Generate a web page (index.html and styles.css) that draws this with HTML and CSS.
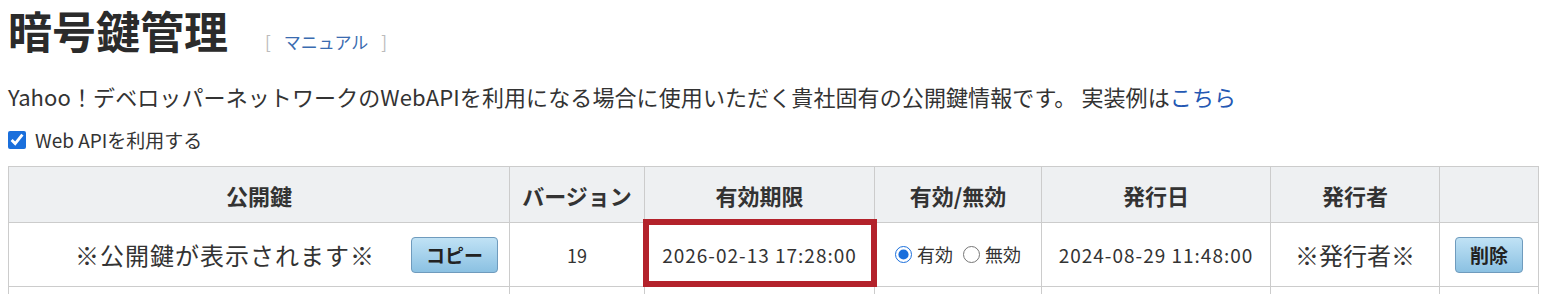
FILE: index.html
```html
<!DOCTYPE html>
<html lang="ja">
<head>
  <meta charset="utf-8">
  <title>暗号鍵管理</title>
  <link rel="stylesheet" href="styles.css">
</head>
<body>

  <div class="page">
    <div class="page-head">
      <h1 class="title">暗号鍵管理</h1>
      <span class="manual">
        <span class="bracket">[</span>
        <a href="#" class="manual-link">マニュアル</a>
        <span class="bracket">]</span>
      </span>
    </div>

    <p class="lead">Yahoo！デベロッパーネットワークのWebAPIを利用になる場合に使用いただく貴社固有の公開鍵情報です。 実装例は<a href="#" class="lead-link">こちら</a></p>

    <label class="use-api">
      <input type="checkbox" class="use-api-check" checked>
      <span>Web APIを利用する</span>
    </label>

    <table class="key-table">
      <colgroup>
        <col class="col-key">
        <col class="col-version">
        <col class="col-expire">
        <col class="col-status">
        <col class="col-issued">
        <col class="col-issuer">
        <col class="col-action">
      </colgroup>
      <thead>
        <tr>
          <th>公開鍵</th>
          <th>バージョン</th>
          <th>有効期限</th>
          <th>有効/無効</th>
          <th>発行日</th>
          <th>発行者</th>
          <th></th>
        </tr>
      </thead>
      <tbody>
        <tr class="key-row">
          <td>
            <div class="key-cell">
              <span class="key-text">※公開鍵が表示されます※</span>
              <button class="btn">コピー</button>
            </div>
          </td>
          <td class="num">19</td>
          <td class="date expire">
            <span class="highlight"></span>
            2026-02-13 17:28:00
          </td>
          <td class="status">
            <label class="radio"><input type="radio" name="status" checked>有効</label>
            <label class="radio"><input type="radio" name="status">無効</label>
          </td>
          <td class="date">2024-08-29 11:48:00</td>
          <td class="issuer">※発行者※</td>
          <td class="action"><button class="btn">削除</button></td>
        </tr>
        <tr class="key-row">
          <td></td><td></td><td></td><td></td><td></td><td></td><td></td>
        </tr>
      </tbody>
    </table>
  </div>

</body>
</html>
```

FILE: styles.css
```css
body {
  margin: 0;
  color: #333;
  background-color: white;
  font-family: "Noto Sans CJK JP", "Noto Sans", sans-serif;
}

.page {
  padding: 4px 8px 0;
}

.page-head {
  display: flex;
  align-items: baseline;
}

.title {
  margin: 0;
  font-size: 44px;
  line-height: 52px;
  font-weight: bold;
  color: #2b2b2b;
}

.manual {
  margin-left: 37px;
  font-size: 17px;
  display: flex;
  gap: 13px;
}

.bracket {
  color: #bbb;
}

.manual-link {
  color: #3a6bb0;
  text-decoration: none;
}

.lead {
  margin: 24px 0 0;
  font-size: 22px;
  line-height: 33px;
  letter-spacing: 0.1px;
}

.lead-link {
  color: #2458b3;
  text-decoration: none;
}

.use-api {
  display: flex;
  align-items: center;
  gap: 9px;
  margin-top: 13px;
  font-size: 19px;
  line-height: 28px;
}

.use-api-check {
  margin: 0;
  width: 18px;
  height: 18px;
  accent-color: #1a6fdc;
}

.key-table {
  margin-top: 12px;
  width: 1530px;
  border-collapse: collapse;
  table-layout: fixed;
}

.col-key { width: 501px; }
.col-version { width: 135px; }
.col-expire { width: 230px; }
.col-status { width: 167px; }
.col-issued { width: 229px; }
.col-issuer { width: 169px; }
.col-action { width: 99px; }

.key-table th,
.key-table td {
  border: 1px solid #ccc;
  text-align: center;
  padding: 0;
}

.key-table th {
  height: 55px;
  background-color: #eef0f2;
  font-size: 22px;
  font-weight: bold;
}

.key-row td {
  height: 63px;
  font-size: 18px;
}

.key-cell {
  display: flex;
  align-items: center;
  padding: 0 11px 0 30px;
}

.key-text {
  flex: 1;
  font-size: 24px;
  letter-spacing: 1px;
}

.btn {
  font-family: inherit;
  font-size: 19px;
  font-weight: bold;
  color: #222;
  height: 36px;
  padding: 0 14px;
  border: 1px solid #6f9bbd;
  border-radius: 4px;
  background: linear-gradient(#c0e2f5, #8bc1e2);
  cursor: pointer;
}

.key-row .date {
  font-size: 19px;
  letter-spacing: 1px;
}

.expire {
  position: relative;
}

.highlight {
  position: absolute;
  top: -4px;
  left: -2px;
  right: -3px;
  bottom: -1px;
  border: 6px solid #b3222b;
}

.key-row .status {
  font-size: 18px;
}

.radio {
  display: inline-flex;
  align-items: center;
  gap: 5px;
  margin: 0 3px;
}

.radio input {
  margin: 0;
  width: 17px;
  height: 17px;
  accent-color: #1a6fdc;
}

.key-row .issuer {
  font-size: 24px;
}
```
